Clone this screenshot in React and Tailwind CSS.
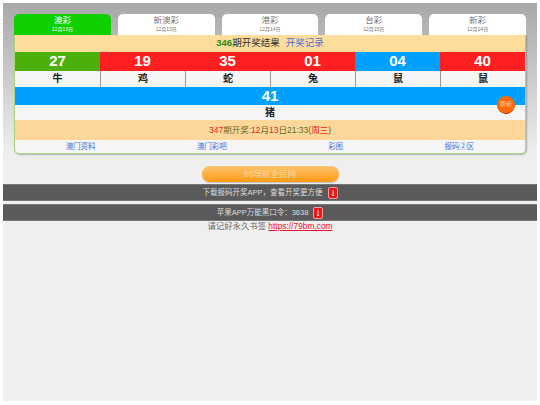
const tabs = [
  { name: '澳彩', date: '12月13日', active: true },
  { name: '新澳彩', date: '12月13日' },
  { name: '港彩', date: '12月14日' },
  { name: '台彩', date: '12月15日' },
  { name: '新彩', date: '12月14日' },
];

const balls = [
  { num: '27', animal: '牛', color: 'bg-[#4cb00c]' },
  { num: '19', animal: '鸡', color: 'bg-[#fe2020]' },
  { num: '35', animal: '蛇', color: 'bg-[#fe2020]' },
  { num: '01', animal: '兔', color: 'bg-[#fe2020]' },
  { num: '04', animal: '鼠', color: 'bg-[#00a0fe]' },
  { num: '40', animal: '鼠', color: 'bg-[#fe2020]' },
];

const links = ['澳门资料', '澳门彩吧', '彩图', '报码②区'];

const DownloadBar = ({ children }) => (
  <div className="flex h-[17px] items-center justify-center gap-[5px] border-y border-[#777] bg-[#5a5a5a] text-[7.5px] text-[#ddd]">
    <span>{children}</span>
    <span className="flex h-[12px] w-[10px] items-end justify-center rounded-[2px] border border-[#f99] bg-[#e81818] pb-[1px]">
      <svg width="6" height="8" viewBox="0 0 6 8" fill="none" stroke="white" strokeWidth="0.8">
        <path d="M3 1V7M1.8 5.8L3 7L4.2 5.8" />
      </svg>
    </span>
  </div>
);

export default function App() {
  return (
    <div className="h-[405px] w-[540px] overflow-hidden bg-white px-[3px] pt-[3px] font-['Liberation_Sans','Noto_Sans_CJK_SC',sans-serif]">
      <div className="h-[398px] bg-[linear-gradient(#a8a8a8,#efefef_150px)]">
        <div className="px-[11px] pt-[11px]">
          <div className="flex gap-[7px]">
            {tabs.map((tab) => (
              <div
                key={tab.name}
                className={`flex h-[21px] flex-1 flex-col items-center rounded-t-[5px] pt-[1px] ${tab.active ? 'bg-[#10d000] text-white' : 'bg-white text-[#777]'}`}
              >
                <span className="text-[8.5px] leading-[11px]">{tab.name}</span>
                <span className="text-[5px] leading-[7px]">{tab.date}</span>
              </div>
            ))}
          </div>
          <div className="overflow-hidden rounded-b-[5px] border border-t-0 border-[#a5d57d] bg-[#f5f5f5] shadow-[1px_1px_2px_rgba(0,0,0,0.25)]">
            <div className="flex h-[17px] items-center justify-center gap-[6px] bg-[#fedc9c] text-[9.5px]">
              <span className="text-[#333]">
                <b className="text-[#2a8a10]">346</b>期开奖结果
              </span>
              <span className="text-[#4a70d8]">开奖记录</span>
            </div>
            <div className="grid grid-cols-6">
              {balls.map((ball, i) => (
                <div key={i}>
                  <div className={`flex h-[19px] items-center justify-center text-[15px] font-bold text-white ${ball.color}`}>{ball.num}</div>
                  <div className={`flex h-[16px] items-center justify-center pb-[1px] text-[10px] font-bold text-[#222] ${i > 0 ? 'border-l border-[#999]' : ''}`}>{ball.animal}</div>
                </div>
              ))}
            </div>
            <div className="flex h-[18px] items-center justify-center bg-[#00a0fe] text-[15px] font-bold text-white">41</div>
            <div className="relative flex h-[15px] items-center justify-center text-[10px] font-bold text-[#222]">
              猪
              <div className="absolute right-[10px] top-[-9px] flex h-[18px] w-[18px] items-center justify-center rounded-full border-b border-[#c03010] bg-[#fe6a00] text-[6px] font-normal text-[#ffd0a0]">刷新</div>
            </div>
            <div className="flex h-[20px] items-center justify-center bg-[#fed79a] text-[8.5px] text-[#556b2f]">
              <span className="text-[#f02020]">347</span>期开奖:<span className="text-[#f02020]">12</span>月<span className="text-[#f02020]">13</span>日21:33(<span className="text-[#f02020]">周三</span>)
            </div>
            <div className="flex h-[13px] items-center justify-around text-[7.5px] text-[#4a70d8]">
              {links.map((link) => (
                <span key={link}>{link}</span>
              ))}
            </div>
          </div>
        </div>
        <div className="mx-auto mt-[12px] flex h-[16px] w-[137px] items-center justify-center rounded-full bg-[linear-gradient(#fcc46c,#fc9a14)] text-[8.5px] text-[#fad9a5] shadow-[0_1px_1px_rgba(0,0,0,0.2)]">66导航全民网</div>
        <div className="mt-[2px] flex flex-col gap-[3px]">
          <DownloadBar>下载报码开奖APP，查看开奖更方便</DownloadBar>
          <DownloadBar>苹果APP万能黑口令：3638</DownloadBar>
        </div>
        <div className="text-center text-[8.4px] leading-[11px] text-[#666]">
          请记好永久书签 <a className="text-[#f01030] underline">https://79bm.com</a>
        </div>
      </div>
    </div>
  );
}
